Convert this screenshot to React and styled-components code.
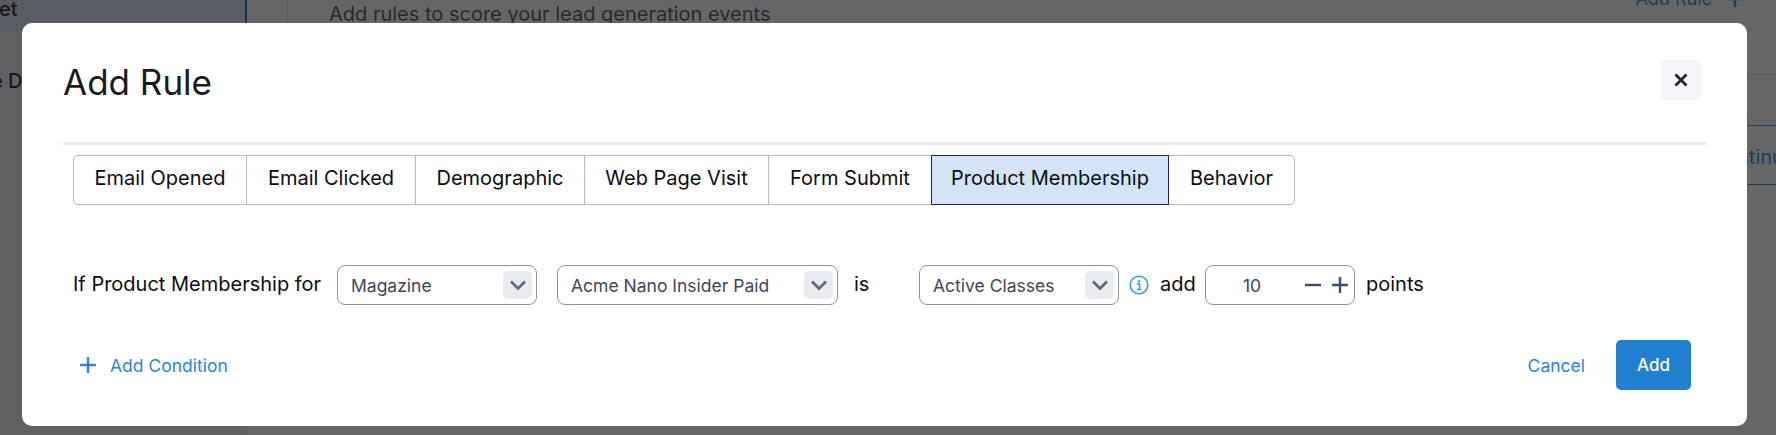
import React from "react";
import styled, { createGlobalStyle } from "styled-components";

const Global = createGlobalStyle`
  html, body { margin: 0; padding: 0; height: 100%; }
  body { font-family: Inter, "Noto Sans", sans-serif; background: #fff; overflow: hidden; }
  #root { height: 100%; }
  * { box-sizing: border-box; }
`;

const Page = styled.div`
  position: relative;
  display: flex;
  width: 1776px;
  height: 435px;
  overflow: hidden;
  background: #fff;
`;
const Sidebar = styled.aside`
  width: 247px;
  flex: none;
  display: flex;
  flex-direction: column;
  background: #eff0f7;
`;
const SideActive = styled.div`
  height: 31px;
  background: #dfe6f7;
  border-right: 2px solid #2a85d8;
  font-size: 20px;
  font-weight: 500;
  line-height: 18px;
  color: #333a4a;
  text-indent: -1px;
`;
const SideItem = styled.div`
  margin-top: 37px;
  font-size: 20px;
  font-weight: 500;
  line-height: 26px;
  color: #333a4a;
  text-indent: -9px;
`;
const Main = styled.main`
  flex: 1;
  min-width: 0;
  margin-left: 40px;
  display: flex;
  flex-direction: column;
`;
const MainHead = styled.div`
  display: flex;
  justify-content: space-between;
  height: 75px;
  flex: none;
  border-left: 1px solid #e2e2e2;
  border-bottom: 1px solid #e2e2e2;
  padding: 0 33px 0 41px;
`;
const MainDesc = styled.p`
  margin: 3px 0 0;
  font-size: 20px;
  line-height: 22px;
  color: #5f6a80;
`;
const AddRuleLink = styled.span`
  display: flex;
  align-items: center;
  gap: 15px;
  margin-top: -12px;
  height: 22px;
  font-size: 18px;
  line-height: 22px;
  color: #3c9ef5;
`;
const ContinueButton = styled.div`
  align-self: flex-end;
  margin: 50px -37px 0 0;
  width: 120px;
  height: 60px;
  flex: none;
  border-top: 1px solid #3c9ef5;
  border-bottom: 1px solid #3c9ef5;
  font-size: 20px;
  line-height: 62px;
  color: #3c9ef5;
  text-align: center;
`;
const Overlay = styled.div`
  position: absolute;
  inset: 0;
  background: rgba(0, 0, 0, 0.6);
`;
const Modal = styled.div`
  position: absolute;
  left: 22px;
  top: 23px;
  width: 1725px;
  height: 403px;
  background: #fff;
  border-radius: 10px;
  padding: 37px 41px 36px;
  display: flex;
  flex-direction: column;
  color: #111;
`;
const Header = styled.header`
  display: flex;
  align-items: center;
  justify-content: space-between;
  height: 40px;
  padding-right: 5px;
`;
const Title = styled.h2`
  margin: 0;
  padding-top: 4px;
  font-size: 35px;
  font-weight: 400;
  line-height: 40px;
  color: #1b1b1f;
`;
const CloseButton = styled.button`
  width: 40px;
  height: 40px;
  border: none;
  padding: 0;
  border-radius: 5px;
  background: #f5f5f8;
  display: flex;
  align-items: center;
  justify-content: center;
`;
const Divider = styled.hr`
  border: none;
  height: 3px;
  margin: 42px 0 10px;
  background: #e9e9e9;
`;
const Tabs = styled.div`
  display: flex;
  align-self: flex-start;
  margin-left: 10px;
  height: 50px;
`;
const Tab = styled.div`
  height: 50px;
  width: ${p => p.$w}px;
  display: flex;
  align-items: center;
  justify-content: center;
  padding-bottom: 4px;
  font-size: 20px;
  color: #0d0d12;
  background: ${p => (p.$active ? "#d2e4f5" : "#fff")};
  border: 1px solid ${p => (p.$active ? "#1a2a48" : "#b5b9c8")};
  margin-left: -1px;
  position: relative;
  z-index: ${p => (p.$active ? 1 : 0)};
  white-space: nowrap;
  &:first-child { border-radius: 5px 0 0 5px; margin-left: 0; }
  &:last-child { border-radius: 0 5px 5px 0; }
`;
const RuleRow = styled.div`
  display: flex;
  align-items: center;
  height: 40px;
  margin: 60px 0 35px;
  padding-left: 10px;
  font-size: 20px;
  color: #0d0d12;
`;
const RowLabel = styled.span`
  width: ${p => p.$w}px;
  margin-left: ${p => p.$ml || 0}px;
  margin-top: -2px;
  flex: none;
  white-space: nowrap;
`;
const Select = styled.div`
  width: ${p => p.$w}px;
  height: 40px;
  flex: none;
  margin-left: ${p => p.$ml || 0}px;
  display: flex;
  align-items: center;
  justify-content: space-between;
  padding: 0 4px 0 13px;
  border: 1px solid #8c93a3;
  border-radius: 8px;
  font-size: 17.5px;
  color: #3f4658;
  background: #fff;
`;
const ChevronBox = styled.span`
  width: 29px;
  height: 28px;
  border-radius: 5px;
  background: #e9ebef;
  display: flex;
  align-items: center;
  justify-content: center;
`;
const InfoIcon = styled.svg`
  width: 20px;
  height: 20px;
  flex: none;
  margin-left: 10px;
`;
const Stepper = styled.div`
  position: relative;
  width: 150px;
  height: 40px;
  flex: none;
  margin-left: 10px;
  border: 1px solid #8c93a3;
  border-radius: 8px;
  display: flex;
  align-items: center;
  font-size: 17.5px;
  color: #3f4658;
`;
const StepValue = styled.span`
  width: 92px;
  text-align: center;
`;
const StepButton = styled.span`
  width: 16px;
  height: 16px;
  margin-left: ${p => p.$ml}px;
  display: flex;
`;
const Footer = styled.footer`
  display: flex;
  align-items: center;
  height: 50px;
  padding: 0 15px 0 17px;
`;
const AddCondition = styled.span`
  display: flex;
  align-items: center;
  gap: 14px;
  font-size: 17.5px;
  color: #2a85d8;
`;
const Cancel = styled.span`
  margin-left: auto;
  font-size: 17.5px;
  color: #2a85d8;
`;
const AddButton = styled.button`
  width: 75px;
  height: 50px;
  margin-left: 31px;
  border: none;
  border-radius: 5px;
  background: #2180d0;
  color: #fff;
  font: 500 17px Inter, sans-serif;
`;

const Chevron = () => (
  <svg width="18" height="12" viewBox="0 0 18 12" fill="none">
    <path d="M2 2.5 9 9.5 16 2.5" stroke="#5f6b80" strokeWidth="2.8" />
  </svg>
);
const Plus = ({ color, w = 2.4 }) => (
  <svg width="16" height="16" viewBox="0 0 16 16" fill="none">
    <path d="M8 0V16M0 8H16" stroke={color} strokeWidth={w} />
  </svg>
);

const tabs = [
  ["Email Opened", 174],
  ["Email Clicked", 170],
  ["Demographic", 170],
  ["Web Page Visit", 185],
  ["Form Submit", 164],
  ["Product Membership", 238, true],
  ["Behavior", 127],
];

export default function App() {
  return (
    <Page>
      <Global />
      <Sidebar>
        <SideActive>et</SideActive>
        <SideItem>e D</SideItem>
      </Sidebar>
      <Main>
        <MainHead>
          <MainDesc>Add rules to score your lead generation events</MainDesc>
          <AddRuleLink>Add Rule <Plus color="#3c9ef5" /></AddRuleLink>
        </MainHead>
        <ContinueButton>Continue</ContinueButton>
      </Main>
      <Overlay />
      <Modal>
        <Header>
          <Title>Add Rule</Title>
          <CloseButton aria-label="Close">
            <svg width="14" height="14" viewBox="0 0 14 14" fill="none">
              <path d="M1.5 1.5 12.5 12.5M12.5 1.5 1.5 12.5" stroke="#1a2238" strokeWidth="2.6" />
            </svg>
          </CloseButton>
        </Header>
        <Divider />
        <Tabs>
          {tabs.map(([label, w, active]) => (
            <Tab key={label} $w={w} $active={active}>{label}</Tab>
          ))}
        </Tabs>
        <RuleRow>
          <RowLabel $w={264}>If Product Membership for</RowLabel>
          <Select $w={200}>Magazine<ChevronBox><Chevron /></ChevronBox></Select>
          <Select $w={281} $ml={20}>Acme Nano Insider Paid<ChevronBox><Chevron /></ChevronBox></Select>
          <RowLabel $w={65} $ml={16}>is</RowLabel>
          <Select $w={200}>Active Classes<ChevronBox><Chevron /></ChevronBox></Select>
          <InfoIcon viewBox="0 0 20 20" fill="none">
            <circle cx="10" cy="10" r="8.8" stroke="#2a9df0" strokeWidth="1.6" />
            <circle cx="10" cy="6.2" r="1.2" fill="#2a9df0" />
            <path d="M8 9H10.6V14M8 14.4H12.4" stroke="#2a9df0" strokeWidth="1.5" />
          </InfoIcon>
          <RowLabel $w={35} $ml={11}>add</RowLabel>
          <Stepper>
            <StepValue>10</StepValue>
            <StepButton $ml={7}>
              <svg width="16" height="16" viewBox="0 0 16 16" fill="none"><path d="M0 8H16" stroke="#3f4e68" strokeWidth="2.4" /></svg>
            </StepButton>
            <StepButton $ml={11}><Plus color="#3f4e68" /></StepButton>
          </Stepper>
          <RowLabel $w={60} $ml={11}>points</RowLabel>
        </RuleRow>
        <Footer>
          <AddCondition><Plus color="#2a85d8" />Add Condition</AddCondition>
          <Cancel>Cancel</Cancel>
          <AddButton>Add</AddButton>
        </Footer>
      </Modal>
    </Page>
  );
}
